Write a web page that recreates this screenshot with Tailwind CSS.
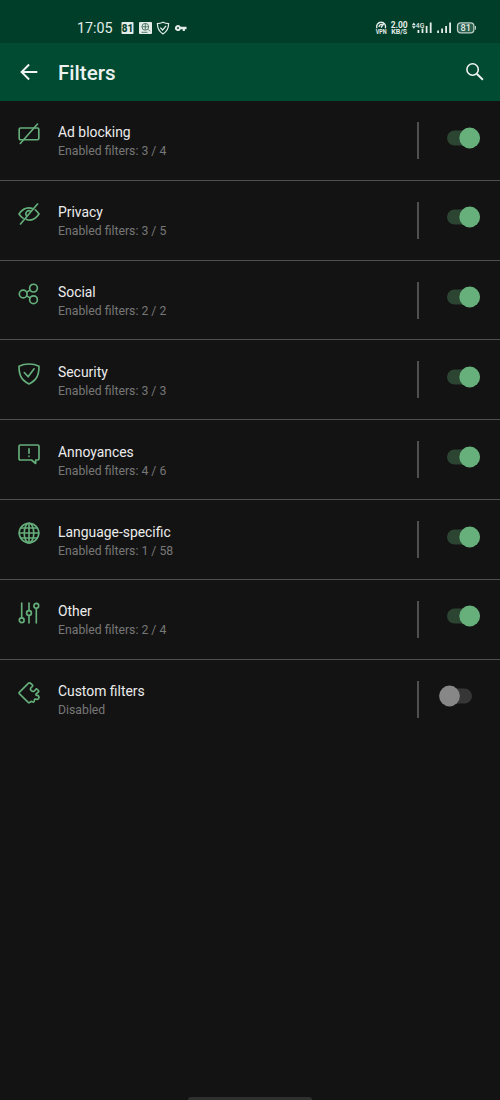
<!DOCTYPE html>
<html lang="en">
<head>
<meta charset="utf-8">
<meta name="viewport" content="width=device-width">
<title>Filters</title>
<script src="https://cdn.jsdelivr.net/npm/@tailwindcss/browser@4"></script>
</head>
<body class="bg-[#131313] font-[Roboto,sans-serif] text-[#ececec]">
<div class="flex h-[1100px] w-[500px] flex-col overflow-hidden bg-[#131313]">
  <div class="flex h-[43px] shrink-0 items-center bg-[#003e29] pt-[13px] pr-[23px] pl-[77px] text-[#e3ece8]">
    <span class="w-[44px] text-[14.3px] leading-none whitespace-nowrap">17:05</span>
    <svg class="h-[14px] w-[68px]" viewBox="0 0 68 14">
      <rect x="0.5" y="1" width="12" height="12" rx="1" fill="#e3ece8"/>
      <text x="6.5" y="10.6" font-family="Roboto" font-size="10" font-weight="800" text-anchor="middle" fill="#003e29">81</text>
      <rect x="18" y="1" width="13" height="12" rx="1" fill="#e3ece8"/>
      <g fill="none" stroke="#315f4e" stroke-width="0.8"><circle cx="24.3" cy="5.800" r="3.4"/><path d="M21 5.800h6.5M24.300 2.500v6.500M27 8.3l2 2M20.5 11.3h6"/></g>
      <path d="M42 1.2c2 .9 3.7 1.3 5.6 1.4 0 5-1.5 8.1-5.6 10.3-4.1-2.2-5.6-5.3-5.6-10.3 1.900-.1 3.600-.5 5.600-1.400zM39.300 6.700l2.300 2.300 3.500-4.200" fill="none" stroke="#e3ece8" stroke-width="1.200"/>
      <path d="M57 4a3 3 0 1 0 2.700 4.200h2v1.800h2.200v-1.800h1.600v-2.400h-5.800a3 3 0 0 0-2.700-1.800zm0 2a1 1 0 1 1 0 2 1 1 0 0 1 0-2z" fill="#e3ece8" fill-rule="evenodd"/>
    </svg>
    <svg class="ml-auto h-[16px] w-[102px]" viewBox="375 20 102 16">
      <path d="M376.900 28.300a4.500 4.500 0 1 1 8.400 0M379 27a2.600 2.600 0 0 1 4.200-2M381 27.500l2.500-3.500" fill="none" stroke="#e3ece8" stroke-width="1.400"/>
      <g fill="#e3ece8" font-family="Roboto" font-weight="700">
        <text x="375.700" y="33.700" font-size="7" textLength="11" lengthAdjust="spacingAndGlyphs">VPN</text>
        <text x="390.700" y="27.500" font-size="8.800" textLength="17" lengthAdjust="spacingAndGlyphs">2.00</text>
        <text x="391.200" y="34.400" font-size="7.200" textLength="16" lengthAdjust="spacingAndGlyphs">KB/S</text>
        <text x="415.800" y="27.800" font-size="7.500" font-weight="500" textLength="8.500" lengthAdjust="spacingAndGlyphs">4G</text>
        <path d="M411.800 25.200l2-2.600 2 2.600zM411.800 26.200l2 2.600 2-2.600z"/>
        <path d="M417.500 30h1.800v3h-1.800zM421.600 28.500h1.800v4.500h-1.800zM425.700 26h1.800v7h-1.800zM429.800 22.600h1.800v10.400h-1.800zM437.200 30.500h1.800v2.500h-1.800zM441.200 28.500h1.800v4.500h-1.800zM445.200 26h1.800v7h-1.800zM449.200 22.600h1.800v10.400h-1.800z"/>
      </g>
      <rect x="457.500" y="22.800" width="16.400" height="10" rx="3.300" fill="#2b604c" stroke="#bccdc5" stroke-width="1.300"/>
      <path d="M475.500 26v3.600" stroke="#bccdc5"/>
      <text x="465.700" y="31.100" font-family="Roboto" font-size="9.300" font-weight="500" text-anchor="middle" fill="#e3ece8">81</text>
    </svg>
  </div>
  <header class="flex h-[58px] shrink-0 items-center bg-[#004b32] pr-[16px] pl-[20px]">
    <svg class="h-[18px] w-[18px]" viewBox="0 0 18 18" fill="none" stroke="#f0f4f2" stroke-width="1.900"><path d="M17.300 9H2M9.100 1.500L1.600 9l7.500 7.500"/></svg>
    <h1 class="ml-[20px] pt-[2px] text-[20.600px] leading-6 font-medium text-[#ecf2ef]">Filters</h1>
    <svg class="ml-auto h-[18px] w-[18px]" viewBox="0 0 18 18" fill="none" stroke="#f0f4f2" stroke-width="1.600"><circle cx="6.600" cy="6.500" r="5.700"/><path d="M10.700 10.700l6.200 6" stroke-width="1.900"/></svg>
  </header>
  <main id="list"></main>
  <div class="mx-auto mt-auto h-[3px] w-[124px] shrink-0 rounded-t bg-[#303030]"></div>
</div>
<script>
const rows = [
  ['Ad blocking', 'Enabled filters: 3 / 4', '<rect x="1.200" y="5" width="19.600" height="11.700" rx="1.300"/><path d="M2.300 20.500L19.500 1"/>'],
  ['Privacy', 'Enabled filters: 3 / 5', '<path d="M14 5.400C8.500 3.800 4.200 6.500 1 11c1.200 1.800 2.400 3 4 4.200M17.300 6.800c1.500 1.200 2.600 2.500 3.700 4.200-3.400 5-7.700 7.200-12.500 5.400M12.500 7.900c-3-1.100-5.700 1.700-4.200 4.600M2.500 21L19.500 1"/>'],
  ['Social', 'Enabled filters: 2 / 2', '<circle cx="5.200" cy="11" r="3.900"/><circle cx="15.500" cy="5.100" r="3.900"/><circle cx="15.500" cy="16.700" r="3.900"/><path d="M8.600 9.100l3.500-2M8.600 12.900l3.500 2"/>'],
  ['Security', 'Enabled filters: 3 / 3', '<path d="M11 1C7.500 1 4 1.700 1 3.200c0 9 2.300 13.900 10 17.800 7.700-3.900 10-8.800 10-17.800C18 1.700 14.500 1 11 1zM6.300 9.500l3.800 4.300 6-8"/>'],
  ['Annoyances', 'Enabled filters: 4 / 6', '<path d="M2.300 2h17.400q1.300 0 1.300 1.300v12.400q0 1.300-1.300 1.300h-2v3.500L13.500 17H2.300Q1 17 1 15.700V3.300Q1 2 2.300 2zM11 5.800v4.500M11 13v.5"/>'],
  ['Language-specific', 'Enabled filters: 1 / 58', '<circle cx="11" cy="11" r="9.800"/><ellipse cx="11" cy="11" rx="4.800" ry="9.800"/><path d="M11 1.200v19.600M1.200 11h19.600M2.700 6h16.600M2.700 16h16.600"/>'],
  ['Other', 'Enabled filters: 2 / 4', '<path d="M3.700 1v14.700M11 1v7.500M11 13.500V21M18.300 6.300V21"/><circle cx="3.700" cy="18.200" r="2.400"/><circle cx="11" cy="11" r="2.400"/><circle cx="18.300" cy="3.800" r="2.400"/>'],
  ['Custom filters', 'Disabled', '<path d="M10.300 1.300L1.300 10.400q-.5.600 0 1.200l8.900 8.800q.8.700 1.600 0l.8-.8c.9-.8 1.900.9 3.100.4 1.200-.6.100-2.300 1-2.900.9-.5 2.500 1.100 3.700-.3 1.400-1.600.2-3.600-1.700-3.400-1.100 0-1-1.200-.3-1.800l2-1.600q.8-.8 0-1.500l-1.200-1.200q-.8-.7-1.500.1c-1 2.200-2.900 2.600-4.400 1.300-1.500-1.400-.8-3.200.8-4 .9-.5.800-1.200.2-1.800l-1.600-1.600q-1.200-.8-2.400 0z"/>', true]
];
document.getElementById('list').innerHTML = rows.map(([title, detail, icon, off]) => `
  <section class="flex h-[79.830px] items-start pr-[19px] pl-[18px] ${off ? '' : 'border-b border-[#505050]'}">
    <svg class="mt-[22.300px] h-[22px] w-[22px] shrink-0" viewBox="0 0 22 22" fill="none" stroke="#65af7b" stroke-width="1.650" stroke-linejoin="round" stroke-linecap="round">${icon}</svg>
    <div class="ml-[18px] pt-[21.400px]">
      <h2 class="text-[13.900px] leading-[20px] text-[#ececec]">${title}</h2>
      <p class="text-[12.250px] leading-[19.600px] text-[#777777]">${detail}</p>
    </div>
    <div class="mt-[21px] ml-auto h-[37px] w-[2px] bg-[#505050]"></div>
    <svg class="mt-[25.500px] ml-[20px] h-[22px] w-[42px]" viewBox="0 0 42 22">${off
      ? '<rect x="8" y="3.500" width="25" height="15" rx="7.500" fill="#363636"/><circle cx="10.500" cy="11" r="10.400" fill="#878787"/>'
      : '<rect x="8" y="3.500" width="25" height="15" rx="7.500" fill="#2c4532"/><circle cx="30.700" cy="11" r="10.400" fill="#67b07c"/>'}</svg>
  </section>`).join('');
</script>
</body>
</html>
